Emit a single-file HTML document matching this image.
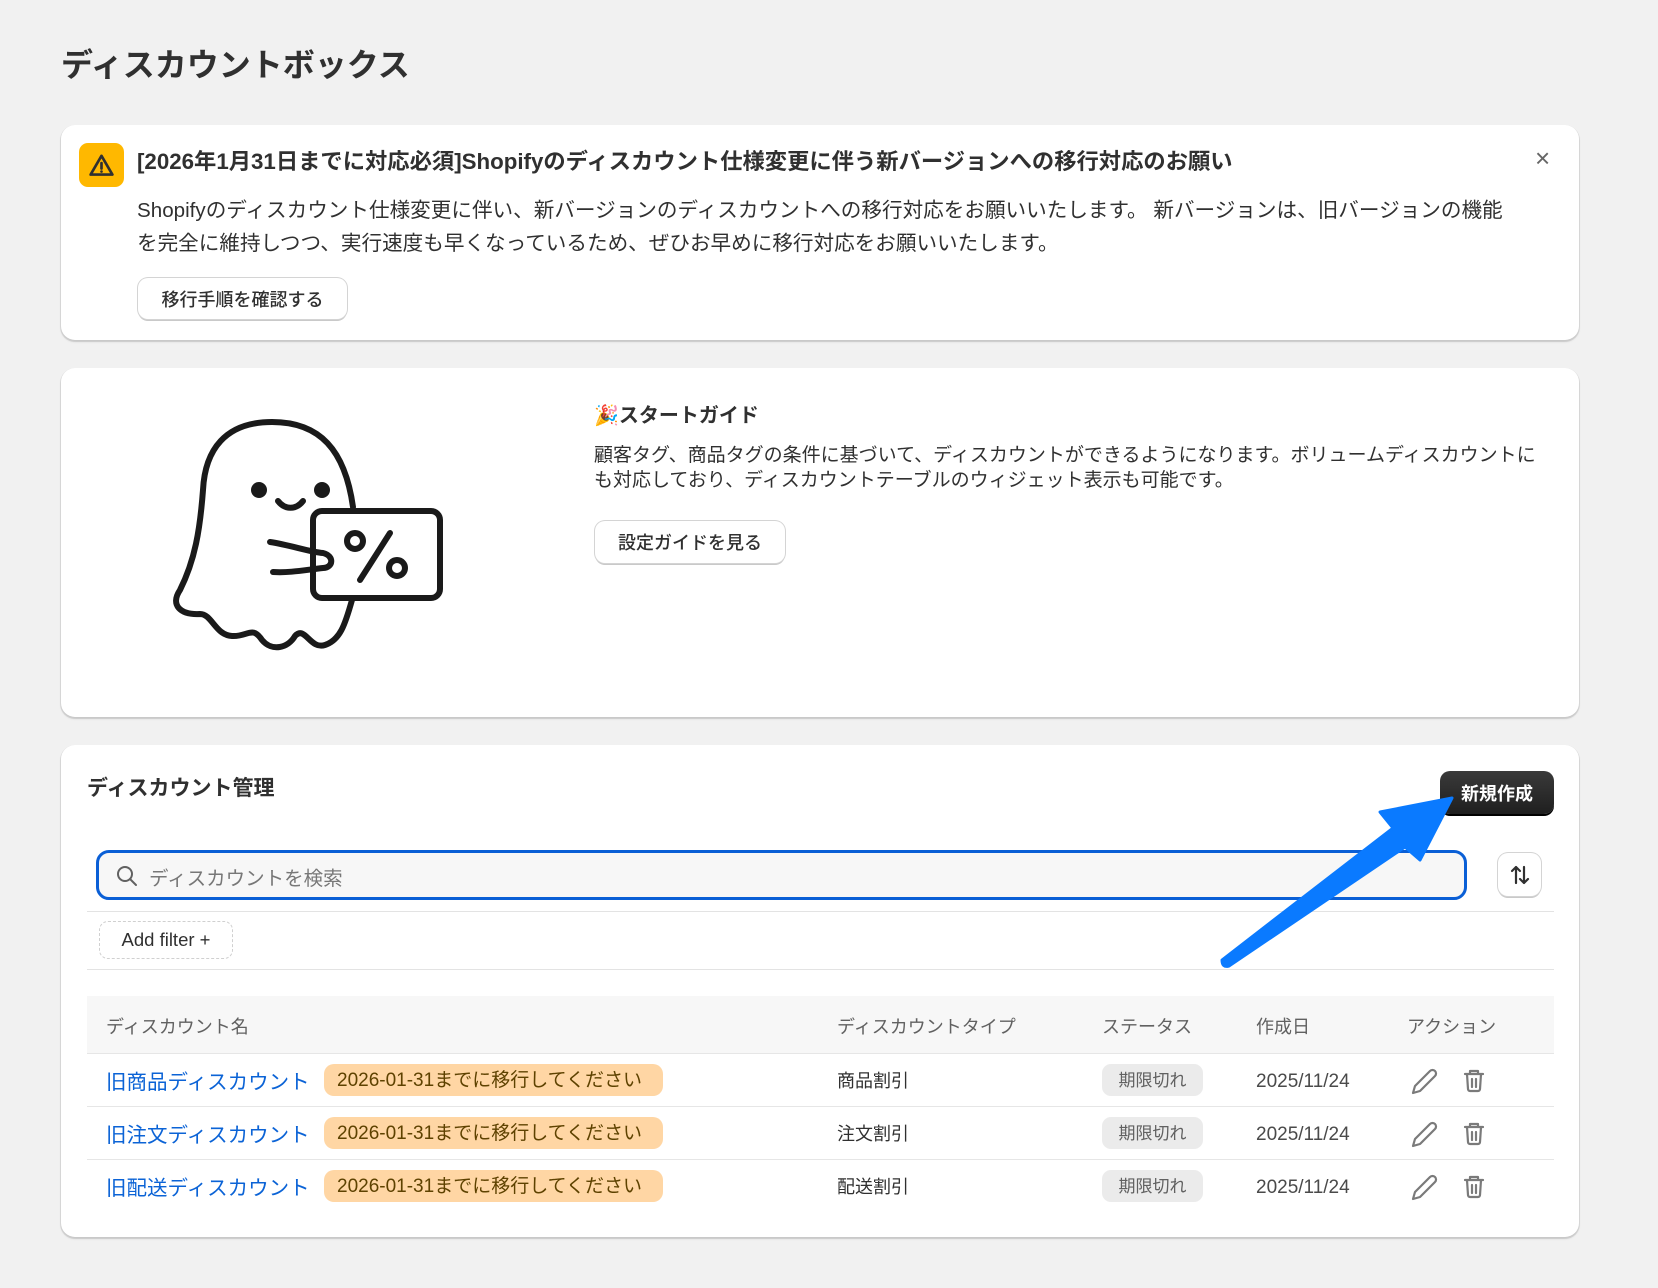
<!DOCTYPE html>
<html><head><meta charset="utf-8">
<style>
*{box-sizing:border-box;margin:0;padding:0}
body{width:1658px;height:1288px;background:#f1f1f1;font-family:"Liberation Sans","Noto Sans CJK JP",sans-serif;color:#303030;position:relative;overflow:hidden}
.abs{position:absolute}
.card{position:absolute;left:61px;width:1518px;background:#fff;border-radius:14px;box-shadow:0 1px 0 1px rgba(0,0,0,0.08),0 2px 2px rgba(0,0,0,0.1)}
.btn{position:absolute;background:#fff;border-radius:10px;box-shadow:0 0 0 1px #d4d4d4,0 2px 0 #c9c9c9;font-size:18px;font-weight:500;display:flex;align-items:center;justify-content:center;color:#303030}
.th{position:absolute;top:1013px;font-size:18px;color:#616161}
.row{position:absolute;left:87px;width:1467px;height:53px;border-top:1px solid #e6e6e6}
.row span{position:absolute;top:50%;transform:translateY(-50%);white-space:nowrap}
.link{left:19px;color:#0b63d6;font-size:20.5px}
.warn{left:237px;background:#ffd6a4;color:#5e4200;font-size:19px;border-radius:10px;height:32px;line-height:34px;padding:0 13px;width:339px}
.type{left:750px;font-size:18px}
.stat{left:1015px;background:#ebebeb;color:#616161;font-size:17px;border-radius:9px;height:32px;line-height:34px;width:101px;text-align:center}
.date{left:1169px;font-size:19px;color:#4a4a4a;margin-top:2px}
</style></head><body>
<div class="abs" style="left:61px;top:40px;font-size:32px;font-weight:700;color:#303030">ディスカウントボックス</div>

<div class="card" style="top:125px;height:215px"></div>
<div class="abs" style="left:79px;top:143px;width:45px;height:44px;background:#ffb800;border-radius:9px"></div>
<svg class="abs" style="left:87px;top:151px" width="29" height="29" viewBox="0 0 24 24"><path d="M12 4 L21 19.5 H3 Z" fill="none" stroke="#303030" stroke-width="2.2" stroke-linejoin="round"/><path d="M12 10v4.5" stroke="#303030" stroke-width="2.2" stroke-linecap="round"/><circle cx="12" cy="17" r="1.1" fill="#303030"/></svg>
<div class="abs" style="left:137px;top:144px;font-size:22.3px;font-weight:700;white-space:nowrap">[2026年1月31日までに対応必須]Shopifyのディスカウント仕様変更に伴う新バージョンへの移行対応のお願い</div>
<div class="abs" style="left:1535px;top:143px;font-size:26px;color:#666">×</div>
<div class="abs" style="left:137px;top:194px;width:1372px;font-size:20.6px;line-height:33px;color:#303030">Shopifyのディスカウント仕様変更に伴い、新バージョンのディスカウントへの移行対応をお願いいたします。 新バージョンは、旧バージョンの機能を完全に維持しつつ、実行速度も早くなっているため、ぜひお早めに移行対応をお願いいたします。</div>
<div class="btn" style="left:138px;top:278px;width:209px;height:41px">移行手順を確認する</div>

<div class="card" style="top:368px;height:349px"></div>
<svg class="abs" style="left:0;top:0" width="1658" height="1288" viewBox="0 0 1658 1288">
<g fill="none" stroke="#1a1a1a" stroke-width="6" stroke-linecap="round" stroke-linejoin="round">
<path d="M353 507 C345 450 320 422 272 422 C225 422 205 450 203 490 C200 530 195 560 180 590 C170 605 180 615 200 614 C212 614 215 635 232 636 C248 637 252 625 262 640 C272 652 288 648 295 636 C305 625 310 650 325 645 C340 640 345 625 352 600"/>
<path d="M270 542 C290 545 310 552 323 553 C335 556 333 568 323 568 C305 570 290 573 273 572"/>
<rect x="313" y="511" width="127" height="87" rx="9"/>
<path d="M390 533 L360 580"/>
<circle cx="355" cy="541" r="8"/>
<circle cx="397" cy="568" r="8"/>
<path d="M278 501 C285 510 296 510 303 501"/>
</g>
<circle cx="259" cy="490" r="8" fill="#1a1a1a"/>
<circle cx="322" cy="490" r="8" fill="#1a1a1a"/>
</svg>
<div class="abs" style="left:594px;top:399px;font-size:20px;font-weight:700">🎉スタートガイド</div>
<div class="abs" style="left:594px;top:443px;width:955px;font-size:19px;line-height:25px">顧客タグ、商品タグの条件に基づいて、ディスカウントができるようになります。ボリュームディスカウントにも対応しており、ディスカウントテーブルのウィジェット表示も可能です。</div>
<div class="btn" style="left:595px;top:521px;width:190px;height:42px">設定ガイドを見る</div>

<div class="card" style="top:745px;height:492px"></div>
<div class="abs" style="left:87px;top:772px;font-size:21px;font-weight:700">ディスカウント管理</div>
<div class="abs" style="left:1440px;top:771px;width:114px;height:43px;background:linear-gradient(#3a3a3a,#1f1f1f);border-radius:10px;color:#fff;font-size:18px;font-weight:600;display:flex;align-items:center;justify-content:center;box-shadow:0 2px 0 #000">新規作成</div>
<div class="abs" style="left:96px;top:850px;width:1371px;height:50px;border:3px solid #0a5fd6;border-radius:13px;background:#f7f7f7"></div>
<svg class="abs" style="left:115px;top:864px" width="24" height="24" viewBox="0 0 24 24"><circle cx="10" cy="10" r="7" fill="none" stroke="#616161" stroke-width="2"/><path d="M15 15l6 6" stroke="#616161" stroke-width="2" stroke-linecap="round"/></svg>
<div class="abs" style="left:149px;top:862px;font-size:19.5px;color:#777">ディスカウントを検索</div>
<div class="btn" style="left:1498px;top:853px;width:43px;height:43px"><svg width="24" height="24" viewBox="0 0 24 24" fill="none" stroke="#303030" stroke-width="2.2" stroke-linecap="round" stroke-linejoin="round"><path d="M8 20V4M4 8l4-4 4 4"/><path d="M16 4v16M12 16l4 4 4-4"/></svg></div>
<div class="abs" style="left:87px;top:911px;width:1467px;height:1px;background:#e3e3e3"></div>
<div class="abs" style="left:99px;top:921px;width:134px;height:38px;border:1px dashed #d0d0d0;border-radius:9px;font-size:18.5px;display:flex;align-items:center;justify-content:center">Add filter +</div>
<div class="abs" style="left:87px;top:969px;width:1467px;height:1px;background:#e3e3e3"></div>
<div class="abs" style="left:87px;top:996px;width:1467px;height:57px;background:#f7f7f7"></div>
<div class="th" style="left:106px">ディスカウント名</div>
<div class="th" style="left:837px">ディスカウントタイプ</div>
<div class="th" style="left:1102px">ステータス</div>
<div class="th" style="left:1256px">作成日</div>
<div class="th" style="left:1407px">アクション</div>

<div class="row" style="top:1053px"><span class="link">旧商品ディスカウント</span><span class="warn">2026-01-31までに移行してください</span><span class="type">商品割引</span><span class="stat">期限切れ</span><span class="date">2025/11/24</span></div>
<div class="row" style="top:1106px"><span class="link">旧注文ディスカウント</span><span class="warn">2026-01-31までに移行してください</span><span class="type">注文割引</span><span class="stat">期限切れ</span><span class="date">2025/11/24</span></div>
<div class="row" style="top:1159px"><span class="link">旧配送ディスカウント</span><span class="warn">2026-01-31までに移行してください</span><span class="type">配送割引</span><span class="stat">期限切れ</span><span class="date">2025/11/24</span></div>

<svg class="abs" style="left:0;top:0" width="1658" height="1288" viewBox="0 0 1658 1288">
<g fill="none" stroke="#7a7a7a" stroke-width="2.2" stroke-linecap="round" stroke-linejoin="round">
<path d="M1415 1086 L1430 1071 a3.2 3.2 0 0 1 5 5 L1420 1091 L1413 1093 Z"/>
<path d="M1415 1139 L1430 1124 a3.2 3.2 0 0 1 5 5 L1420 1144 L1413 1146 Z"/>
<path d="M1415 1192 L1430 1177 a3.2 3.2 0 0 1 5 5 L1420 1197 L1413 1199 Z"/>
<g><path d="M1465 1074h18M1470 1074v-3h8v3M1467 1074l1 15a2 2 0 0 0 2 2h8a2 2 0 0 0 2-2l1-15M1472 1079v8M1476 1079v8"/></g>
<g transform="translate(0,53)"><path d="M1465 1074h18M1470 1074v-3h8v3M1467 1074l1 15a2 2 0 0 0 2 2h8a2 2 0 0 0 2-2l1-15M1472 1079v8M1476 1079v8"/></g>
<g transform="translate(0,106)"><path d="M1465 1074h18M1470 1074v-3h8v3M1467 1074l1 15a2 2 0 0 0 2 2h8a2 2 0 0 0 2-2l1-15M1472 1079v8M1476 1079v8"/></g>
</g>
<path d="M1452 798 L1380 812 L1393 828 L1222 960 Q1222 968 1229 966 L1405 847 L1420 860 Z" fill="#0a7aff" stroke="#0a7aff" stroke-width="3" stroke-linejoin="round"/>
</svg>
</body></html>
